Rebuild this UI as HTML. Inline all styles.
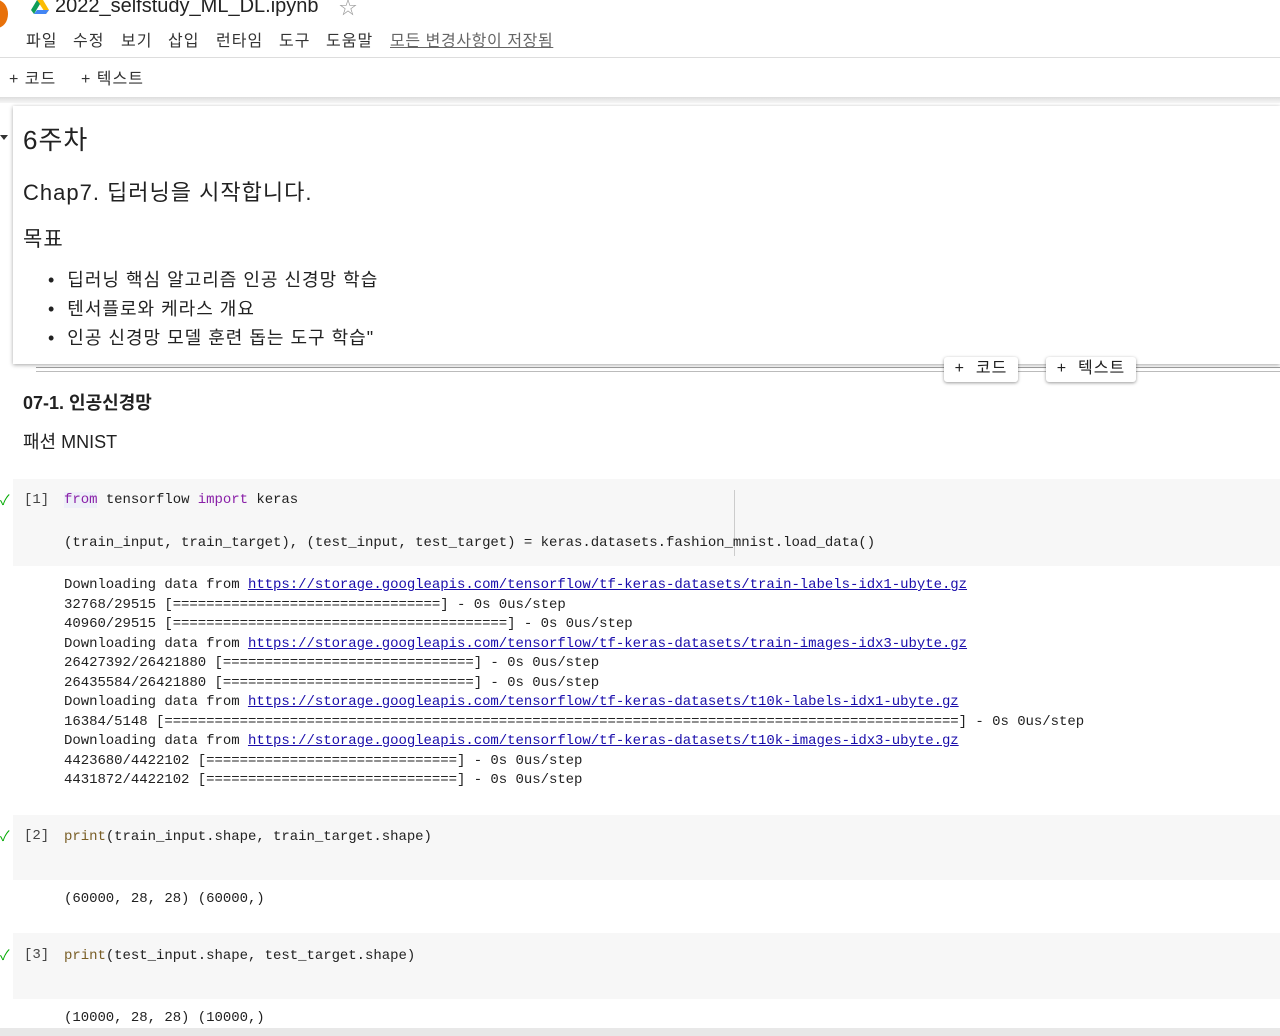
<!DOCTYPE html>
<html><head><meta charset="utf-8"><style>
body{margin:0;width:1280px;height:1036px;overflow:hidden;background:#fff;position:relative;font-family:"Liberation Sans","Noto Sans CJK KR",sans-serif;color:#212121}
.a{position:absolute;white-space:pre}
.m{font-family:"Liberation Mono","Noto Sans CJK KR",monospace;font-size:14px;letter-spacing:-0.04px}
a{color:#1a0dab;text-decoration:underline}
.k{color:#8a21a8}.f{color:#795e26}
.cell{position:absolute;left:13px;right:0;background:#f7f7f7}
.mn{position:absolute;top:27px;font-size:16px;color:#333;letter-spacing:1px}
</style></head><body>
<div class="a" style="left:-14px;top:0;width:22px;height:28px;border-radius:50%;background:#e8710a"></div>
<svg class="a" style="left:31px;top:0" width="18" height="14" viewBox="0 0 18 14"><polygon points="6,0 12,0 18,10 15,14" fill="#fbbc04"/><polygon points="6,0 0,10 3,14 9,4" fill="#0f9d58"/><polygon points="3,14 15,14 18,10 6,10" fill="#4285f4"/></svg>
<div class="a" style="left:55px;top:-5px;font-size:20px;color:#222">2022_selfstudy_ML_DL.ipynb</div>
<div class="a" style="left:339px;top:-6px;font-size:18px;color:#999">☆</div>
<div class="mn" style="left:26px">파일</div>
<div class="mn" style="left:73px">수정</div>
<div class="mn" style="left:121px">보기</div>
<div class="mn" style="left:168px">삽입</div>
<div class="mn" style="left:216px">런타임</div>
<div class="mn" style="left:279px">도구</div>
<div class="mn" style="left:326px">도움말</div>
<div class="mn" style="left:390px;color:#666;text-decoration:underline;letter-spacing:0.6px">모든 변경사항이 저장됨</div>
<div class="a" style="left:0;top:57px;width:1280px;height:1px;background:#ddd"></div>
<div class="a" style="left:9px;top:65px;font-size:16px;color:#333;letter-spacing:1px">+ 코드</div>
<div class="a" style="left:81px;top:65px;font-size:16px;color:#333;letter-spacing:1px">+ 텍스트</div>
<div class="a" style="left:0;top:97px;width:1280px;height:6px;background:linear-gradient(#ddd,#f6f6f6)"></div>
<div class="a" style="left:13px;top:106px;width:1267px;height:258px;background:#fff;box-shadow:0 1px 4px rgba(0,0,0,.35)"></div>
<div class="a" style="left:0;top:135px;width:0;height:0;border-left:4px solid transparent;border-right:4px solid transparent;border-top:5px solid #333"></div>
<div class="a" style="left:23px;top:120px;font-size:26px;letter-spacing:1px">6주차</div>
<div class="a" style="left:23px;top:175px;font-size:22px;letter-spacing:1px">Chap7. 딥러닝을 시작합니다.</div>
<div class="a" style="left:23px;top:223px;font-size:21px;letter-spacing:1px">목표</div>
<div class="a" style="left:48px;top:266px;font-size:18px;line-height:29px;letter-spacing:1px">•  딥러닝 핵심 알고리즘 인공 신경망 학습
•  텐서플로와 케라스 개요
•  인공 신경망 모델 훈련 돕는 도구 학습"</div>
<div class="a" style="left:36px;top:367px;width:1244px;height:3px;border-top:1px solid #999;border-bottom:1px solid #bbb"></div>
<div class="a" style="left:944px;top:357px;width:74px;height:25px;background:#fff;border-radius:3px;box-shadow:0 1px 3px rgba(0,0,0,.4);font-size:16px;text-align:center;line-height:23px;letter-spacing:1px">+  코드</div>
<div class="a" style="left:1046px;top:357px;width:90px;height:25px;background:#fff;border-radius:3px;box-shadow:0 1px 3px rgba(0,0,0,.4);font-size:16px;text-align:center;line-height:23px;letter-spacing:1px">+  텍스트</div>
<div class="a" style="left:23px;top:389px;font-size:18px;font-weight:bold">07-1. 인공신경망</div>
<div class="a" style="left:23px;top:428px;font-size:18px">패션 MNIST</div>

<div class="cell" style="top:479px;height:87px"></div>
<div class="a" style="left:734px;top:490px;width:1px;height:66px;background:#ccc"></div>
<div class="a" style="left:0;top:490px;color:#0a0;font-size:14px">✓</div>
<div class="a m" style="left:24px;top:492px;color:#444">[1]</div>
<div class="a m" style="left:64px;top:479px;line-height:43px"><span class="k" style="background:#eef0f8">from</span> tensorflow <span class="k">import</span> keras
(train_input, train_target), (test_input, test_target) = keras.datasets.fashion_mnist.load_data()</div>
<div class="a m" style="left:64px;top:576px;line-height:19.5px;color:#212121">Downloading data from <a>https://storage.googleapis.com/tensorflow/tf-keras-datasets/train-labels-idx1-ubyte.gz</a>
32768/29515 [================================] - 0s 0us/step
40960/29515 [========================================] - 0s 0us/step
Downloading data from <a>https://storage.googleapis.com/tensorflow/tf-keras-datasets/train-images-idx3-ubyte.gz</a>
26427392/26421880 [==============================] - 0s 0us/step
26435584/26421880 [==============================] - 0s 0us/step
Downloading data from <a>https://storage.googleapis.com/tensorflow/tf-keras-datasets/t10k-labels-idx1-ubyte.gz</a>
16384/5148 [===============================================================================================] - 0s 0us/step
Downloading data from <a>https://storage.googleapis.com/tensorflow/tf-keras-datasets/t10k-images-idx3-ubyte.gz</a>
4423680/4422102 [==============================] - 0s 0us/step
4431872/4422102 [==============================] - 0s 0us/step</div>

<div class="cell" style="top:815px;height:65px"></div>
<div class="a" style="left:0;top:826px;color:#0a0;font-size:14px">✓</div>
<div class="a m" style="left:24px;top:828px;color:#444">[2]</div>
<div class="a m" style="left:64px;top:829px"><span class="f">print</span>(train_input.shape, train_target.shape)</div>
<div class="a m" style="left:64px;top:891px">(60000, 28, 28) (60000,)</div>

<div class="cell" style="top:933px;height:66px"></div>
<div class="a" style="left:0;top:945px;color:#0a0;font-size:14px">✓</div>
<div class="a m" style="left:24px;top:947px;color:#444">[3]</div>
<div class="a m" style="left:64px;top:948px"><span class="f">print</span>(test_input.shape, test_target.shape)</div>
<div class="a m" style="left:64px;top:1010px">(10000, 28, 28) (10000,)</div>
<div class="a" style="left:0;top:1028px;width:1280px;height:8px;background:#e8e8e8"></div>
</body></html>
